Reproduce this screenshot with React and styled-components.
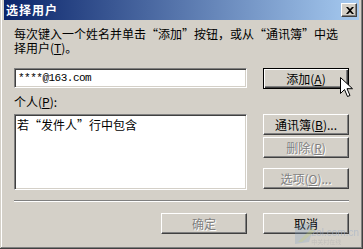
import React from "react";
import styled, { createGlobalStyle } from "styled-components";

const GlobalStyle = createGlobalStyle`
  html, body {
    margin: 0;
    padding: 0;
    background: #d4d0c8;
  }
  * {
    box-sizing: border-box;
  }
`;

const App = () => (
  <>
    <GlobalStyle />
    <WindowStyled>
      <TitleBarStyled>
        <TitleStyled>选择用户</TitleStyled>
        <CloseButtonStyled>
          <svg width="8" height="7" viewBox="0 0 8 7">
            <path
              d="M0 0h2l2 2 2-2h2L5 3.5 8 7H6L4 5 2 7H0l3-3.5z"
              fill="#000"
            />
          </svg>
        </CloseButtonStyled>
      </TitleBarStyled>

      <BodyStyled>
        <HintStyled>
          每次键入一个姓名并单击“添加”按钮，或从“通讯簿”中选
          <br />
          择用户(<u>T</u>)。
        </HintStyled>

        <RowStyled $top={13}>
          <InputStyled>****@163.com</InputStyled>
          <ButtonStyled $default>
            添加(<u>A</u>)
          </ButtonStyled>
        </RowStyled>

        <LabelStyled>
          个人(<u>P</u>):
        </LabelStyled>

        <RowStyled $top={5}>
          <ListBoxStyled>若“发件人”行中包含</ListBoxStyled>
          <SideColumnStyled>
            <ButtonStyled>
              通讯簿(<u>B</u>)...
            </ButtonStyled>
            <ButtonStyled $disabled $top={2}>
              删除(<u>R</u>)
            </ButtonStyled>
            <ButtonStyled $disabled $top={10}>
              选项(<u>O</u>)...
            </ButtonStyled>
          </SideColumnStyled>
        </RowStyled>

        <SeparatorStyled />

        <FooterStyled>
          <ButtonStyled $disabled>确定</ButtonStyled>
          <ButtonStyled>取消</ButtonStyled>
        </FooterStyled>
      </BodyStyled>

      {/* mouse pointer over the add button */}
      <CursorStyled width="13" height="21" viewBox="0 0 13 21">
        <path
          d="M0.5 0.5v16l4-4 3 7 2.5-1-3-6.8h5.5z"
          fill="#fff"
          stroke="#000"
          strokeWidth="1"
        />
      </CursorStyled>

      <WatermarkStyled>
        <svg width="30" height="26" viewBox="0 0 30 26">
          <path d="M2 6l20-4-6 20-14 2z" fill="#7f9fc4" opacity="0.5" />
          <path d="M5 22l14-14 4 2-14 12z" fill="#b8c87a" opacity="0.65" />
        </svg>
        <WatermarkTextStyled>
          <span>zol.com.cn</span>
          <small>中关村在线</small>
        </WatermarkTextStyled>
      </WatermarkStyled>
    </WindowStyled>
  </>
);

export default App;

const WindowStyled = styled.div`
  position: relative;
  width: 363px;
  height: 249px;
  padding: 0 4px 4px 4px;
  background: #d4d0c8;
  box-shadow: inset -1px -1px #404040, inset 1px 0 #d4d0c8,
    inset -2px -2px #808080, inset 2px 0 #ffffff;
  font-family: "Noto Sans CJK SC", "Liberation Sans", sans-serif;
  font-size: 12px;
  color: #000;
  overflow: hidden;

  u {
    text-decoration: underline;
    text-underline-offset: 1px;
  }
`;

const TitleBarStyled = styled.div`
  height: 20px;
  display: flex;
  align-items: center;
  padding: 0 2px 0 2px;
  background: linear-gradient(to right, #0a246a, #a6caf0);
`;

const TitleStyled = styled.div`
  flex: 1;
  color: #fff;
  font-weight: 700;
  font-size: 12px;
  letter-spacing: 1px;
  line-height: 14px;
`;

const CloseButtonStyled = styled.div`
  width: 16px;
  height: 14px;
  display: flex;
  align-items: center;
  justify-content: center;
  background: #d4d0c8;
  border: 1px solid;
  border-color: #fff #404040 #404040 #fff;
  box-shadow: inset -1px -1px #808080;
  padding-left: 1px;
`;

const BodyStyled = styled.div`
  padding: 7px 10px 0 10px;
  display: flex;
  flex-direction: column;
`;

const HintStyled = styled.div`
  line-height: 14px;
  white-space: nowrap;
`;

const RowStyled = styled.div`
  display: flex;
  gap: 16px;
  align-items: flex-start;
  margin-top: ${(p) => p.$top || 0}px;
`;

const sunken = `
  background: #fff;
  border: 1px solid;
  border-color: #808080 #fff #fff #808080;
  box-shadow: inset 1px 1px #404040, inset -1px -1px #d4d0c8;
`;

const InputStyled = styled.div`
  ${sunken}
  width: 233px;
  height: 20px;
  padding: 0 3px;
  font-family: "Liberation Mono", monospace;
  font-size: 11px;
  letter-spacing: -0.5px;
  line-height: 18px;
`;

const LabelStyled = styled.div`
  margin-top: 6px;
  line-height: 14px;
`;

const ListBoxStyled = styled.div`
  ${sunken}
  width: 233px;
  height: 76px;
  padding: 3px 2px;
  line-height: 14px;
`;

const SideColumnStyled = styled.div`
  display: flex;
  flex-direction: column;
`;

const ButtonStyled = styled.div`
  width: 86px;
  height: 21px;
  margin-top: ${(p) => p.$top || 0}px;
  display: flex;
  align-items: center;
  justify-content: center;
  background: #d4d0c8;
  line-height: 14px;
  white-space: nowrap;
  color: ${(p) => (p.$disabled ? "#808080" : "#000")};
  text-shadow: ${(p) => (p.$disabled ? "1px 1px #fff" : "none")};
  border: 1px solid;
  border-color: ${(p) =>
    p.$default ? "#000" : "#fff #404040 #404040 #fff"};
  box-shadow: ${(p) =>
    p.$default
      ? "inset 1px 1px #fff, inset -1px -1px #404040, inset -2px -2px #808080"
      : "inset -1px -1px #808080"};
`;

const SeparatorStyled = styled.div`
  margin-top: 10px;
  height: 2px;
  border-top: 1px solid #808080;
  border-bottom: 1px solid #fff;
`;

const FooterStyled = styled.div`
  display: flex;
  justify-content: flex-end;
  gap: 16px;
  margin-top: 11px;
`;

const CursorStyled = styled.svg`
  position: absolute;
  left: 340px;
  top: 77px;
`;

const WatermarkStyled = styled.div`
  position: absolute;
  right: 4px;
  bottom: 3px;
  display: flex;
  align-items: flex-end;
  opacity: 0.55;
  pointer-events: none;
`;

const WatermarkTextStyled = styled.div`
  display: flex;
  flex-direction: column;
  margin-left: -12px;
  color: #9fb0c8;
  font-family: "Liberation Sans", sans-serif;
  font-size: 10px;
  line-height: 10px;

  small {
    font-family: "Noto Sans CJK SC", sans-serif;
    font-size: 6px;
    line-height: 8px;
    color: #b0b0b0;
  }
`;
